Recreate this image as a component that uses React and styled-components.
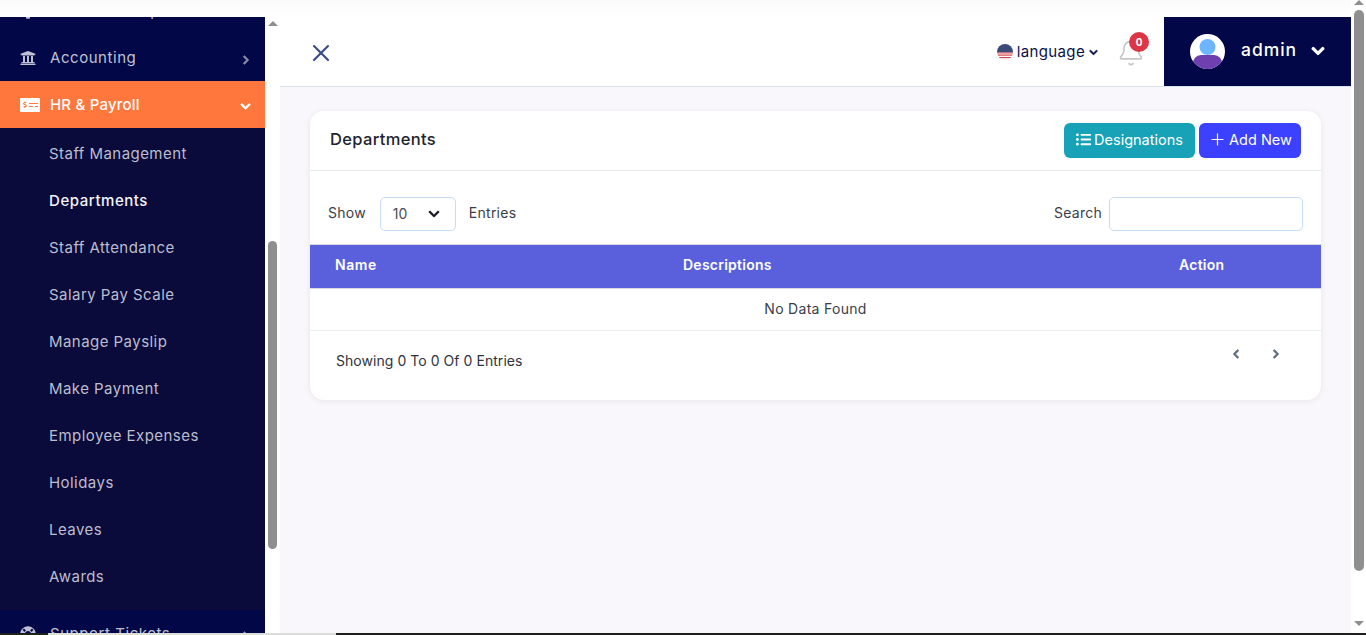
import React from 'react';
import styled, { createGlobalStyle } from 'styled-components';
import { FaUniversity, FaMoneyCheckAlt, FaChevronRight, FaChevronDown, FaChevronLeft, FaListUl, FaLifeRing, FaCog } from 'react-icons/fa';
import { X, Plus, Bell } from 'lucide-react';

const Global = createGlobalStyle`
  html, body { margin: 0; padding: 0; height: 635px; overflow: hidden; background: #fff; }
  * { box-sizing: border-box; }
  body { font-family: Inter, "Open Sans", sans-serif; color: #2b2f3a; }
`;

const Shell = styled.div`
  display: flex;
  flex-direction: column;
  width: 1366px;
  height: 635px;
  overflow: hidden;
`;
const Stage = styled.div`
  display: flex;
  flex: 1;
  min-height: 0;
`;
const Column = styled.div`
  display: flex;
  flex-direction: column;
  width: 1351px;
`;
const TopStrip = styled.div`
  height: 17px;
  flex: none;
  background: linear-gradient(#fafafa, #fff);
`;
const Body = styled.div`
  display: flex;
  flex: 1;
  min-height: 0;
`;
const Sidebar = styled.nav`
  width: 265px;
  flex: none;
  overflow: hidden;
  background: #020847;
`;
const SideList = styled.div`
  margin-top: -30px;
  display: flex;
  flex-direction: column;
`;
const MenuRow = styled.div`
  height: 47px;
  flex: none;
  display: flex;
  align-items: center;
  padding: 0 14px 0 20px;
  font-size: 15px;
  letter-spacing: ${p => (p.$active ? '0.2px' : '0.55px')};
  color: ${p => (p.$active ? '#fff' : '#bfc1d3')};
  background: ${p => (p.$active ? '#ff773d' : 'transparent')};
  font-weight: ${p => (p.$active ? 500 : 400)};
`;
const MenuIcon = styled.span`
  width: 30px;
  flex: none;
  display: flex;
  align-items: center;
  font-size: ${p => p.$size || 16}px;
`;
const MenuLabel = styled.span`
  flex: 1;
  white-space: nowrap;
`;
const MenuCaret = styled.span`
  display: flex;
  margin-top: 4px;
  font-size: ${p => (p.$active ? 11 : 10)}px;
  color: ${p => (p.$active ? '#fff' : '#8a8ca8')};
  svg { stroke: currentColor; stroke-width: 40; }
`;
const SubMenu = styled.div`
  background: #0a0b3b;
  display: flex;
  flex-direction: column;
  padding: 2px 0 10px;
`;
const SubRow = styled.div`
  height: 47px;
  flex: none;
  display: flex;
  align-items: center;
  padding-left: 49px;
  font-size: 15px;
  letter-spacing: ${p => (p.$active ? '0.55px' : '0.45px')};
  white-space: nowrap;
  color: ${p => (p.$active ? '#f4f4f8' : '#bcbdcd')};
  font-weight: ${p => (p.$active ? 500 : 400)};
`;
const Track = styled.div`
  width: 15px;
  flex: none;
  background: #fff;
  display: flex;
  flex-direction: column;
  align-items: center;
`;
const ArrowUp = styled.div`
  width: 0;
  height: 0;
  flex: none;
  margin-top: ${p => p.$mt}px;
  border-left: 5px solid transparent;
  border-right: 5px solid transparent;
  border-bottom: 5px solid #8f8f8f;
`;
const ArrowDown = styled.div`
  width: 0;
  height: 0;
  flex: none;
  border-left: 5px solid transparent;
  border-right: 5px solid transparent;
  border-top: 5px solid #8f8f8f;
`;
const Thumb = styled.div`
  width: ${p => p.$w}px;
  height: ${p => p.$h}px;
  margin-top: ${p => p.$mt}px;
  margin-bottom: ${p => p.$mb || 0}px;
  flex: none;
  background: #8f8f8f;
  border-radius: 5px;
`;
const Main = styled.main`
  flex: 1;
  min-width: 0;
  background: #f9f7fb;
  display: flex;
  flex-direction: column;
`;
const Header = styled.header`
  height: 70px;
  flex: none;
  background: #fff;
  border-bottom: 1px solid #d6e3e8;
  display: flex;
  align-items: stretch;
`;
const CloseBtn = styled.div`
  display: flex;
  align-items: center;
  padding: 2px 0 0 27px;
  margin-right: auto;
  color: #3b4a86;
`;
const Lang = styled.div`
  display: flex;
  align-items: center;
  gap: 4px;
  font-size: 15px;
  color: #0b1048;
  letter-spacing: 0.35px;
`;
const LangCaret = styled.span`
  display: flex;
  font-size: 9px;
  margin-top: 1px;
  color: #0b1048;
  svg { stroke: currentColor; stroke-width: 40; }
`;
const BellWrap = styled.div`
  position: relative;
  margin: 2px 19px 0 19px;
  display: flex;
  align-items: center;
  color: #c4c6c8;
`;
const Badge = styled.span`
  position: absolute;
  top: 13px;
  right: -4px;
  width: 20px;
  height: 20px;
  border-radius: 50%;
  background: #dc3545;
  color: #fff;
  font-size: 10px;
  font-weight: 700;
  display: flex;
  align-items: center;
  justify-content: center;
`;
const UserBox = styled.div`
  width: 187px;
  flex: none;
  background: #020847;
  display: flex;
  align-items: center;
  padding-left: 26px;
  color: #fff;
`;
const UserName = styled.span`
  font-size: 17.5px;
  font-weight: 500;
  letter-spacing: 0.95px;
  margin: 0 14px 4px 16px;
`;
const UserCaret = styled.span`
  display: flex;
  font-size: 14px;
  margin-bottom: 1px;
  svg { stroke: currentColor; stroke-width: 40; }
`;
const Content = styled.div`
  padding: 24px 30px 0 30px;
`;
const Card = styled.section`
  background: #fff;
  border-radius: 14px;
  box-shadow: 0 1px 6px rgba(30, 30, 60, 0.08);
  height: 289px;
`;
const CardHead = styled.div`
  height: 60px;
  border-bottom: 1px solid #e7e8ec;
  display: flex;
  align-items: center;
  justify-content: space-between;
  padding: 0 20px;
`;
const CardTitle = styled.h2`
  margin: 0 0 3px;
  font-size: 16.5px;
  font-weight: 500;
  letter-spacing: 0.35px;
  color: #20242e;
`;
const HeadActions = styled.div`
  display: flex;
  gap: 4px;
`;
const ActionBtn = styled.button`
  height: 35px;
  border: 0;
  border-radius: 6px;
  padding: 0 0 2px;
  width: ${p => p.$w}px;
  background: ${p => p.$bg};
  color: #fff;
  font: inherit;
  font-size: 14.5px;
  letter-spacing: 0;
  display: flex;
  align-items: center;
  justify-content: center;
  gap: ${p => p.$gap}px;
`;
const Controls = styled.div`
  height: 73px;
  display: flex;
  align-items: center;
  justify-content: space-between;
  padding: 13px 18px 0;
`;
const ControlGroup = styled.div`
  display: flex;
  align-items: center;
`;
const ControlText = styled.span`
  font-size: 14px;
  letter-spacing: 0.25px;
  color: #3a3e4a;
  padding-bottom: 3px;
`;
const SelectBox = styled.div`
  width: 76px;
  height: 34px;
  margin: 0 13px 0 14px;
  border: 1px solid #c5dcf3;
  border-radius: 5px;
  display: flex;
  align-items: center;
  justify-content: space-between;
  padding: 0 15px 2px 12px;
  font-size: 14px;
  color: #4a4e58;
`;
const SelectCaret = styled.span`
  display: flex;
  font-size: 12px;
  margin-top: 2px;
  color: #15181f;
  svg { stroke: currentColor; stroke-width: 20; }
`;
const SearchBox = styled.input`
  width: 194px;
  height: 34px;
  margin-left: 7px;
  border: 1px solid #c5dcf3;
  border-radius: 5px;
  background: #fff;
  outline: none;
`;
const TableHead = styled.div`
  height: 45px;
  background: #5a5fdc;
  border-top: 1px solid #d8d9e3;
  border-bottom: 1px solid #d8d9e3;
  padding-bottom: 5px;
  display: grid;
  grid-template-columns: 373px 1fr 142px;
  align-items: center;
  color: #fff;
  font-size: 14px;
  font-weight: 600;
  letter-spacing: 0.25px;
`;
const HeadCell = styled.div`
  padding-left: ${p => p.$pl || 0}px;
  letter-spacing: ${p => (p.$pl ? '0.6px' : 'inherit')};
`;
const EmptyRow = styled.div`
  height: 42px;
  border-bottom: 1px solid #ecedf0;
  padding-bottom: 2px;
  display: flex;
  align-items: center;
  justify-content: center;
  font-size: 14px;
  letter-spacing: 0.3px;
  color: #3a3e4a;
`;
const Footer = styled.div`
  display: flex;
  justify-content: space-between;
  padding: 15px 40px 0 26px;
`;
const FooterText = styled.span`
  font-size: 14px;
  letter-spacing: 0.05px;
  line-height: 30px;
  color: #2f333e;
`;
const Pager = styled.div`
  display: flex;
  gap: 30px;
  font-size: 10px;
  color: #5d6b80;
  padding-top: 3px;
`;
const PagerIcon = styled.span`
  display: flex;
  svg { stroke: currentColor; stroke-width: 40; }
`;
const BottomEdge = styled.div`
  height: 2px;
  flex: none;
  background: #1f1f1f;
  display: flex;
`;
const EdgeLight = styled.div`
  width: 288px;
  margin-left: 48px;
  background: #dcdcdc;
`;

const subs = ['Staff Management', 'Departments', 'Staff Attendance', 'Salary Pay Scale', 'Manage Payslip', 'Make Payment', 'Employee Expenses', 'Holidays', 'Leaves', 'Awards'];

const Flag = () => (
  <svg width="16" height="16" viewBox="0 0 16 16">
    <defs><clipPath id="fc"><circle cx="8" cy="8" r="8" /></clipPath></defs>
    <g clipPath="url(#fc)">
      <rect width="16" height="16" fill="#fff" />
      <rect y="10.5" width="16" height="1.2" fill="#d9434e" />
      <rect y="13" width="16" height="1.2" fill="#d9434e" />
      <rect width="16" height="8.5" fill="#3c4a78" />
      <rect y="8.5" width="16" height="1" fill="#d9434e" />
    </g>
  </svg>
);

const Avatar = () => (
  <svg width="35" height="35" viewBox="0 0 35 35">
    <defs><clipPath id="ac"><circle cx="17.5" cy="17.5" r="17.5" /></clipPath></defs>
    <g clipPath="url(#ac)">
      <rect width="35" height="35" fill="#fff" />
      <circle cx="17.5" cy="13" r="8" fill="#6db5ff" />
      <path d="M3 35V30a8 8 0 0 1 8-9h13a8 8 0 0 1 8 9v5z" fill="#6f3fb0" />
    </g>
  </svg>
);

export default function App() {
  return (
    <Shell>
      <Global />
      <Stage>
        <Column>
          <TopStrip />
          <Body>
            <Sidebar>
              <SideList>
                <MenuRow>
                  <MenuIcon><FaCog /></MenuIcon>
                  <MenuLabel>Student Group</MenuLabel>
                </MenuRow>
                <MenuRow>
                  <MenuIcon><FaUniversity /></MenuIcon>
                  <MenuLabel>Accounting</MenuLabel>
                  <MenuCaret><FaChevronRight /></MenuCaret>
                </MenuRow>
                <MenuRow $active>
                  <MenuIcon $size={20}><FaMoneyCheckAlt /></MenuIcon>
                  <MenuLabel>HR &amp; Payroll</MenuLabel>
                  <MenuCaret $active><FaChevronDown /></MenuCaret>
                </MenuRow>
                <SubMenu>
                  {subs.map(s => <SubRow key={s} $active={s === 'Departments'}>{s}</SubRow>)}
                </SubMenu>
                <MenuRow>
                  <MenuIcon><FaLifeRing /></MenuIcon>
                  <MenuLabel>Support Tickets</MenuLabel>
                  <MenuCaret><FaChevronRight /></MenuCaret>
                </MenuRow>
              </SideList>
            </Sidebar>
            <Track>
              <ArrowUp $mt={4} />
              <Thumb $w={9} $h={308} $mt={215} />
            </Track>
            <Main>
              <Header>
                <CloseBtn><X size={28} strokeWidth={1.8} /></CloseBtn>
                <Lang>
                  <Flag />
                  <span>language</span>
                  <LangCaret><FaChevronDown /></LangCaret>
                </Lang>
                <BellWrap>
                  <Bell size={28} strokeWidth={1.4} />
                  <Badge>0</Badge>
                </BellWrap>
                <UserBox>
                  <Avatar />
                  <UserName>admin</UserName>
                  <UserCaret><FaChevronDown /></UserCaret>
                </UserBox>
              </Header>
              <Content>
                <Card>
                  <CardHead>
                    <CardTitle>Departments</CardTitle>
                    <HeadActions>
                      <ActionBtn $bg="#17a2b8" $w={131} $gap={3}><FaListUl size={15} />Designations</ActionBtn>
                      <ActionBtn $bg="#3c40ff" $w={102} $gap={2}><Plus size={19} strokeWidth={1.5} />Add New</ActionBtn>
                    </HeadActions>
                  </CardHead>
                  <Controls>
                    <ControlGroup>
                      <ControlText>Show</ControlText>
                      <SelectBox>10<SelectCaret><FaChevronDown /></SelectCaret></SelectBox>
                      <ControlText>Entries</ControlText>
                    </ControlGroup>
                    <ControlGroup>
                      <ControlText>Search</ControlText>
                      <SearchBox aria-label="Search" />
                    </ControlGroup>
                  </Controls>
                  <TableHead>
                    <HeadCell $pl={25}>Name</HeadCell>
                    <HeadCell>Descriptions</HeadCell>
                    <HeadCell>Action</HeadCell>
                  </TableHead>
                  <EmptyRow>No Data Found</EmptyRow>
                  <Footer>
                    <FooterText>Showing 0 To 0 Of 0 Entries</FooterText>
                    <Pager>
                      <PagerIcon><FaChevronLeft /></PagerIcon>
                      <PagerIcon><FaChevronRight /></PagerIcon>
                    </Pager>
                  </Footer>
                </Card>
              </Content>
            </Main>
          </Body>
        </Column>
        <Track>
          <ArrowUp $mt={0} />
          <Thumb $w={10} $h={561} $mt={5} $mb={50} />
          <ArrowDown />
        </Track>
      </Stage>
      <BottomEdge><EdgeLight /></BottomEdge>
    </Shell>
  );
}
